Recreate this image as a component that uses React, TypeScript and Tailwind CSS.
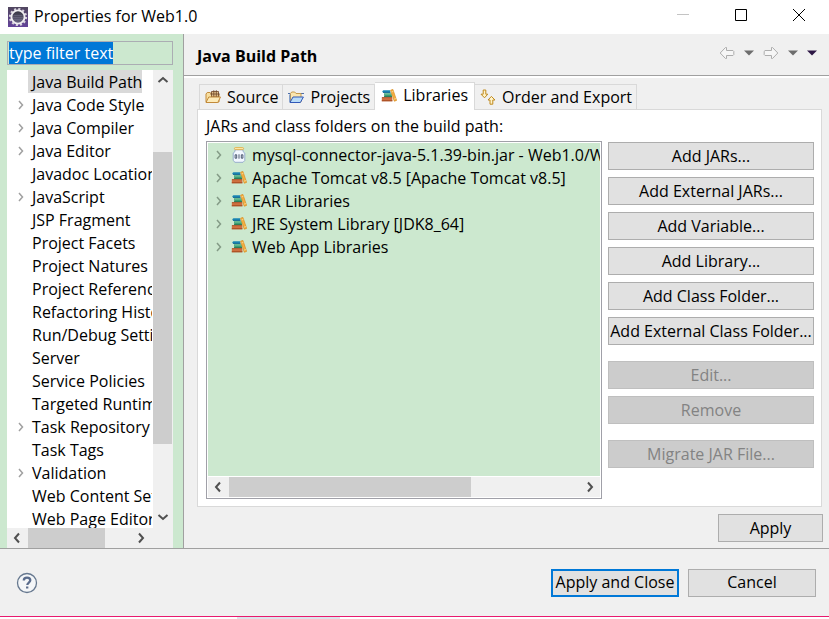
import { useEffect, useRef } from "react";
import type { ReactNode } from "react";

const pages: { name: string; children?: boolean; selected?: boolean }[] = [
  { name: "Java Build Path", selected: true },
  { name: "Java Code Style", children: true },
  { name: "Java Compiler", children: true },
  { name: "Java Editor", children: true },
  { name: "Javadoc Location" },
  { name: "JavaScript", children: true },
  { name: "JSP Fragment" },
  { name: "Project Facets" },
  { name: "Project Natures" },
  { name: "Project References" },
  { name: "Refactoring History" },
  { name: "Run/Debug Settings" },
  { name: "Server" },
  { name: "Service Policies" },
  { name: "Targeted Runtimes" },
  { name: "Task Repository", children: true },
  { name: "Task Tags" },
  { name: "Validation", children: true },
  { name: "Web Content Settings" },
  { name: "Web Page Editor" },
];

const libraries = [
  "Apache Tomcat v8.5 [Apache Tomcat v8.5]",
  "EAR Libraries",
  "JRE System Library [JDK8_64]",
  "Web App Libraries",
];

function Chevron({ className, d }: { className: string; d: string }) {
  return (
    <svg viewBox="0 0 12 12" className={`size-3 shrink-0 ${className}`} fill="none" stroke="currentColor" aria-hidden="true">
      <path d={d} />
    </svg>
  );
}

const RIGHT = "M4 1.5 8 6 4 10.5";
const SMALL_RIGHT = "M4 2 7.5 6 4 10";
const LEFT = "M8 1.5 4 6 8 10.5";
const UP = "M1.5 8 6 4 10.5 8";
const DOWN = "M1.5 3 6 7 10.5 3";

function GearIcon() {
  return (
    <svg viewBox="0 0 20 20" className="size-5" aria-hidden="true">
      <defs>
        <linearGradient id="gear-bg" x1="0" y1="0" x2="0" y2="1">
          <stop offset="0" stopColor="#51475f" />
          <stop offset="1" stopColor="#63439a" />
        </linearGradient>
        <linearGradient id="gear-hub" x1="0" y1="0" x2="0" y2="1">
          <stop offset="0" stopColor="#33323f" />
          <stop offset="1" stopColor="#6d6988" />
        </linearGradient>
      </defs>
      <rect width="20" height="20" fill="url(#gear-bg)" />
      <circle cx="10" cy="10" r="8" fill="none" stroke="#d9d4de" strokeWidth="2.2" strokeDasharray="2.1 2.09" />
      <circle cx="10" cy="10" r="6.6" fill="url(#gear-hub)" stroke="#efedf0" strokeWidth="1.9" />
      <path d="M5.5 8.5h9M5 10.5h10M5.5 12.5h9" stroke="#77728c" strokeWidth=".5" />
    </svg>
  );
}

function BooksIcon() {
  return (
    <svg viewBox="0 0 16 16" className="size-4 shrink-0" aria-hidden="true">
      <path d="M1.2 3.2 2.4 2.2H9l.6 2.6H2z" fill="#1a86b4" />
      <path d="M2 4.4h7.4" stroke="#0c5f8a" strokeWidth=".8" />
      <path d="M3 5.2h7.6l.4 3.6H3.4z" fill="#3da377" />
      <path d="M3 8.4h8" stroke="#1f6e4d" strokeWidth=".9" />
      <path d="M4 6.2h6" stroke="#7cc7a3" strokeWidth=".7" />
      <path d="M.8 9.2h10.6v4H.8z" fill="#cf7040" />
      <path d="M.8 12.8h10.6" stroke="#9d431b" strokeWidth=".9" />
      <path d="M1 9.6h10" stroke="#a5502a" strokeWidth=".8" />
      <path d="m9.6 2.2 2.3-.8 3.7 11-2.3.8z" fill="#f4b044" stroke="#d98b1d" strokeWidth=".7" />
      <path d="m10.4 4 2-.7M13 11.2l2-.7" stroke="#ffe0a0" strokeWidth=".7" />
    </svg>
  );
}

function JarIcon() {
  return (
    <svg viewBox="0 0 16 16" className="size-4 shrink-0" aria-hidden="true">
      <path d="M4 2.8h8v1.7l1.8 1.6v7.4L12 15.3H4l-1.8-1.8V6.1L4 4.5z" fill="#f2f7ff" stroke="#8fa5c9" strokeWidth=".9" />
      <rect x="3.4" y=".6" width="9.2" height="2" rx="1" fill="#fdeab0" stroke="#dfa83a" strokeWidth=".8" />
      <path d="M4.1 7.8h1.6v3.4H4.1zM8 7.3v4.4M10.3 7.8h1.6v3.4h-1.6z" fill="none" stroke="#3c4963" strokeWidth=".9" />
    </svg>
  );
}

function SourceIcon() {
  return (
    <svg viewBox="0 0 16 16" className="size-4 shrink-0" aria-hidden="true">
      <path d="M1 13V5l1.2-1.5h3L6.5 5H14v8z" fill="#f8dfa0" stroke="#c28a3a" />
      <path d="M6.5 2.5h7V8h-7z" fill="#e2c08b" stroke="#6d4526" strokeWidth=".8" />
      <path d="M8.8 1.2V8M11.3 1.2V8M5.3 5h9.4" stroke="#6d4526" strokeWidth=".8" />
      <path d="M1 13.5 3.8 8h11.7l-2.7 5.5z" fill="#fdebb9" stroke="#c28a3a" />
    </svg>
  );
}

function ProjectsIcon() {
  return (
    <svg viewBox="0 0 16 16" className="size-4 shrink-0" aria-hidden="true">
      <path d="M0 4.5h2M13 4.5h3" stroke="#4e6fa8" />
      <path d="M2.5 13V4.5L3.7 3h3L8 4.5h5V13z" fill="#fbe6ae" stroke="#c59a4d" />
      <path d="M1.8 5.5v7.7" stroke="#5a80bd" />
      <path d="M2 13.5 5 8h10.4l-3 5.5z" fill="#b9dcf8" stroke="#3158b8" />
    </svg>
  );
}

function OrderIcon() {
  return (
    <svg viewBox="0 0 16 16" className="size-4 shrink-0" fill="#fff3c9" stroke="#c08a1e" aria-hidden="true">
      <path d="M3.2 1h2.6v4.2h2L4.5 8.8 1 5.2h2.2z" />
      <path d="M10 15.2V11H8l3.4-3.6L15 11h-2.2v4.2z" />
    </svg>
  );
}

function Arrow({ flip }: { flip?: boolean }) {
  return (
    <svg viewBox="0 0 16 14" className={`h-3.5 w-4 ${flip ? "-scale-x-100" : ""}`} aria-hidden="true">
      <path d="M1.2 7 6.5 1.5h1v3H14l.8.8v3.4l-.8.8H7.5v3h-1z" fill="#f6f6f6" stroke="#adadad" />
    </svg>
  );
}

function Caret({ className }: { className: string }) {
  return (
    <svg viewBox="0 0 10 6" className={`h-1.5 w-2.5 ${className}`} fill="currentColor" aria-hidden="true">
      <path d="M0 .5h10L5 5.5z" />
    </svg>
  );
}

function PushButton({
  children,
  disabled,
  primary,
  className = "",
}: {
  children: ReactNode;
  disabled?: boolean;
  primary?: boolean;
  className?: string;
}) {
  return (
    <button
      type="button"
      disabled={disabled}
      className={`flex h-7 shrink-0 items-center justify-center bg-[#e1e1e1] whitespace-nowrap disabled:border-[#bfbfbf] disabled:bg-[#cccccc] disabled:text-[#838383] ${
        primary ? "border-2 border-[#0078d7]" : "border border-[#adadad]"
      } ${className}`}
    >
      {children}
    </button>
  );
}

function Tab({ icon, label, active }: { icon: ReactNode; label: string; active?: boolean }) {
  return (
    <button
      type="button"
      role="tab"
      aria-selected={!!active}
      className={
        active
          ? "-mb-px flex h-7 items-center gap-1.5 border-r border-t border-[#d9d9d9] bg-white pr-1.5 pb-0.5 pl-1.5 whitespace-nowrap"
          : "flex h-[25px] items-center gap-1.5 border-t border-r border-[#d9d9d9] pr-1 pl-[5px] whitespace-nowrap first:border-l"
      }
    >
      {icon}
      {label}
    </button>
  );
}

export default function App() {
  const filter = useRef<HTMLInputElement>(null);

  useEffect(() => {
    filter.current?.focus();
    filter.current?.select();
  }, []);

  return (
    <div className="flex h-screen flex-col overflow-hidden bg-[#f0f0f0] font-['Open_Sans','Noto_Sans',sans-serif] text-base leading-[23px] text-black">
      <header className="flex h-[34px] shrink-0 items-center bg-white pl-2">
        <GearIcon />
        <h1 className="grow pb-0.5 pl-1.5">Properties for Web1.0</h1>
        <div className="flex items-center gap-[46px] pr-6 pb-1">
          <button type="button" aria-label="Minimize" disabled>
            <svg viewBox="0 0 12 12" className="size-3" stroke="#c4c4c4"><path d="M0 5.5h12" /></svg>
          </button>
          <button type="button" aria-label="Maximize">
            <svg viewBox="0 0 12 12" className="size-3" fill="none" stroke="#000"><path d="M.5.5h11v11H.5z" /></svg>
          </button>
          <button type="button" aria-label="Close">
            <svg viewBox="0 0 12 12" className="size-3" stroke="#000"><path d="m0 0 12 12M12 0 0 12" /></svg>
          </button>
        </div>
      </header>

      <div className="flex min-h-0 grow">
        <aside className="flex w-[183px] shrink-0 flex-col bg-[#cce8cf] pt-[7px] pr-2.5 pl-[7px]">
          <input
            ref={filter}
            aria-label="Filter"
            defaultValue="type filter text"
            className="h-6 w-full shrink-0 border border-[#abadb3] bg-[#cce8cf] p-px outline-none selection:bg-[#0078d7] selection:text-white"
          />
          <div className="mt-[5px] flex min-h-0 grow bg-white">
            <ul role="tree" aria-label="Property pages" className="mr-px min-w-0 grow overflow-hidden pl-2">
              {pages.map((p) => (
                <li key={p.name} role="treeitem" aria-selected={!!p.selected} className="flex h-[23px] items-center">
                  <span className="w-[13px] shrink-0 text-[#a0a0a0]">
                    {p.children && <Chevron className="stroke-[1.5]" d={SMALL_RIGHT} />}
                  </span>
                  <span className={`pt-0.5 pr-0 pl-1 leading-[21px] whitespace-nowrap ${p.selected ? "bg-[#d9d9d9]" : ""}`}>{p.name}</span>
                </li>
              ))}
            </ul>
            <div className="flex w-5 shrink-0 flex-col items-center bg-[#f0f0f0] py-1 text-[#505050]">
              <Chevron className="stroke-2" d={UP} />
              <div className="flex min-h-0 w-full grow flex-col pt-1 pb-1.5">
                <div className="grow-[15]" />
                <div className="mr-px grow-[70] bg-[#cdcdcd]" />
                <div className="grow-[15]" />
              </div>
              <Chevron className="stroke-2" d={DOWN} />
            </div>
          </div>
          <div className="flex h-5 shrink-0 items-center bg-[#f0f0f0] pr-[26px] pl-1 text-[#505050]">
            <Chevron className="stroke-2" d={LEFT} />
            <div className="flex h-5 grow px-[5px]">
              <div className="w-3/4 bg-[#cdcdcd]" />
            </div>
            <Chevron className="stroke-2" d={RIGHT} />
          </div>
        </aside>

        <main className="flex min-w-0 grow flex-col border-l border-[#a0a0a0]">
          <div className="flex h-[42px] shrink-0 items-center justify-between border-b border-[#a0a0a0] pr-3 pl-[13px]">
            <h2 className="pt-1 font-bold">Java Build Path</h2>
            <div className="flex items-center gap-[9px] pb-1">
              <button type="button" aria-label="Back"><Arrow /></button>
              <button type="button" aria-label="Back history"><Caret className="text-[#6d6d6d]" /></button>
              <button type="button" aria-label="Forward"><Arrow flip /></button>
              <button type="button" aria-label="Forward history"><Caret className="text-[#6d6d6d]" /></button>
              <button type="button" aria-label="View menu"><Caret className="text-[#2d1745]" /></button>
            </div>
          </div>

          <section className="flex min-h-0 grow flex-col border-t-2 border-white pt-1 pr-[7px] pl-[13px]">
            <div role="tablist" className="relative flex items-end pl-0.5">
              <Tab icon={<SourceIcon />} label="Source" />
              <Tab icon={<ProjectsIcon />} label="Projects" />
              <Tab icon={<BooksIcon />} label="Libraries" active />
              <Tab icon={<OrderIcon />} label="Order and Export" />
            </div>
            <div role="tabpanel" className="flex min-h-0 grow flex-col border border-[#d9d9d9] bg-white pt-[5px] pr-[7px] pb-[7px] pl-2">
              <p>JARs and class folders on the build path:</p>
              <div className="mt-[3px] flex min-h-0 grow gap-1.5">
                <div className="flex min-w-0 grow flex-col border border-[#a0a0a8] p-px">
                  <ul role="tree" aria-label="Build path" className="grow overflow-hidden bg-[#cce8cf] pl-[5px]">
                    {["mysql-connector-java-5.1.39-bin.jar - Web1.0/WebContent", ...libraries].map((name, i) => (
                      <li key={name} role="treeitem" className="flex h-[23px] items-center whitespace-nowrap">
                        <Chevron className="mr-1.5 text-[#849b86] stroke-[1.5]" d={SMALL_RIGHT} />
                        {i === 0 ? <JarIcon /> : <BooksIcon />}
                        <span className="pt-0.5 pl-[5px] leading-[21px]">{name}</span>
                      </li>
                    ))}
                  </ul>
                  <div className="mt-px flex h-5 shrink-0 items-center bg-[#f0f0f0] px-1 text-[#505050]">
                    <Chevron className="stroke-2" d={LEFT} />
                    <div className="flex h-5 grow px-[5px]">
                      <div className="w-[69%] bg-[#cdcdcd]" />
                    </div>
                    <Chevron className="stroke-2" d={RIGHT} />
                  </div>
                </div>
                <div className="flex w-[206px] shrink-0 flex-col gap-[7px] pt-px">
                  <PushButton>Add JARs...</PushButton>
                  <PushButton>Add External JARs...</PushButton>
                  <PushButton>Add Variable...</PushButton>
                  <PushButton>Add Library...</PushButton>
                  <PushButton>Add Class Folder...</PushButton>
                  <PushButton>Add External Class Folder...</PushButton>
                  <PushButton disabled className="mt-[9px]">Edit...</PushButton>
                  <PushButton disabled>Remove</PushButton>
                  <PushButton disabled className="mt-[9px]">Migrate JAR File...</PushButton>
                </div>
              </div>
            </div>
            <div className="-mr-px flex justify-end pt-[7px] pb-1.5">
              <PushButton className="w-[105px]">Apply</PushButton>
            </div>
          </section>
        </main>
      </div>

      <footer className="flex h-[68px] shrink-0 items-center border-t border-[#a0a0a0] bg-[#f0f0f0] pr-[13px] pl-4">
        <button type="button" aria-label="Help" className="mr-auto">
          <svg viewBox="0 0 22 22" className="size-[22px]" fill="none">
            <circle cx="11" cy="11" r="9.5" fill="#f4f6f8" stroke="#66788f" strokeWidth="1.3" />
            <path d="M7.8 8.6c0-2 1.4-3 3.2-3s3.3 1 3.3 2.7c0 2.2-3 2.3-3 4.7M11.2 14.4v2.2" stroke="#5a6c8c" strokeWidth="2.3" />
          </svg>
        </button>
        <div className="flex gap-[9px]">
          <PushButton primary className="w-32">Apply and Close</PushButton>
          <PushButton className="w-32">Cancel</PushButton>
        </div>
      </footer>
      <div className="h-[3px] shrink-0 border-t border-[#e8196e] bg-white pl-[237px]">
        <div className="h-0.5 w-[103px] bg-[#dce3ea]" />
      </div>
    </div>
  );
}
